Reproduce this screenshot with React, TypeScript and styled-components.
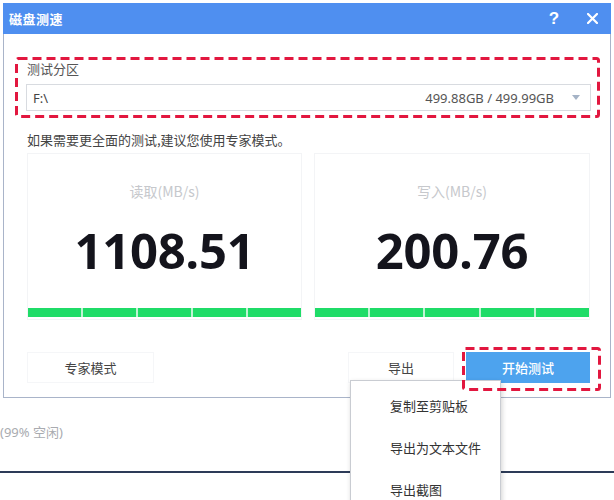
import React from "react";
import styled, { createGlobalStyle } from "styled-components";

const GlobalStyle = createGlobalStyle`
  html, body {
    margin: 0;
    padding: 0;
    background: #ffffff;
  }
  body {
    font-family: "Noto Sans CJK SC", "Noto Sans", sans-serif;
    -webkit-font-smoothing: antialiased;
  }
  * { box-sizing: border-box; }
`;

const Page = styled.div`
  position: relative;
  width: 614px;
  height: 500px;
  overflow: hidden;
  background: #fff;
  padding-top: 3px;
`;

const Dialog = styled.div`
  margin-left: 3px;
  width: 608px;
  border: 1px solid #a9b4c9;
  border-top: none;
  background: #fff;
`;

const TitleBar = styled.div`
  height: 31px;
  margin-left: -1px;
  margin-right: -1px;
  background: #4f8ff0;
  display: flex;
  align-items: center;
  padding: 0 0 0 6px;
  color: #fff;
`;

const Title = styled.div`
  flex: 1;
  font-size: 13px;
  font-weight: 700;
  letter-spacing: 0.5px;
`;

const TitleButton = styled.div`
  width: 38px;
  height: 31px;
  display: flex;
  align-items: center;
  justify-content: center;
  font-family: "Liberation Sans", Arial, sans-serif;
  font-size: 17px;
  font-weight: 700;
`;

const Body = styled.div`
  padding: 26px 20px 14px 23px;
  display: flex;
  flex-direction: column;
`;

const FieldLabel = styled.div`
  font-size: 13px;
  line-height: 18px;
  color: #555;
`;

const Select = styled.div`
  margin: 6px -1px 0 -1px;
  height: 27px;
  border: 1px solid #d8dbe0;
  display: flex;
  align-items: center;
  padding: 0 10px 0 6px;
  font-size: 13px;
  color: #444;
  font-family: "Noto Sans", "Noto Sans CJK SC", sans-serif;
`;

const SelectValue = styled.div`
  flex: 1;
`;

const SelectSize = styled.div`
  color: #555;
  margin-right: 18px;
`;

const Caret = styled.div`
  width: 0;
  height: 0;
  border-left: 4px solid transparent;
  border-right: 4px solid transparent;
  border-top: 5px solid #a5b3c6;
`;

const Hint = styled.div`
  margin-top: 20px;
  font-size: 13px;
  line-height: 18px;
  color: #444;
`;

const Cards = styled.div`
  margin-top: 4px;
  display: grid;
  grid-template-columns: 275px 276px;
  column-gap: 12px;
`;

const Card = styled.div`
  height: 167px;
  border: 1px solid #f3f4f6;
  display: flex;
  flex-direction: column;
  align-items: center;
  padding-top: 28px;
  padding-bottom: 2px;
`;

const CardLabel = styled.div`
  font-size: 14px;
  line-height: 18px;
  color: #c6c8cc;
`;

const Speed = styled.div`
  margin-top: 20px;
  font-family: "Open Sans", "Noto Sans", sans-serif;
  font-weight: 700;
  font-size: 49px;
  line-height: 60px;
  color: #14141c;
  letter-spacing: -0.3px;
`;

const Bar = styled.div`
  margin-top: auto;
  align-self: stretch;
  height: 9px;
  display: flex;
  gap: 2px;
  background: #bff3d3;
`;

const Segment = styled.div`
  flex: 1;
  background: #1fdc68;
`;

const ButtonRow = styled.div`
  margin-top: 32px;
  display: flex;
  align-items: center;
`;

const GhostButton = styled.div<{ $width: number }>`
  width: ${(p) => p.$width}px;
  height: 31px;
  border: 1px solid #f5f6f8;
  display: flex;
  align-items: center;
  justify-content: center;
  font-size: 13px;
  color: #444;
`;

const Spacer = styled.div`
  flex: 1;
`;

const PrimaryButton = styled.div`
  margin-left: 12px;
  width: 124px;
  height: 31px;
  background: #4da3ee;
  color: #fff;
  display: flex;
  align-items: center;
  justify-content: center;
  font-size: 13px;
  font-weight: 500;
`;

const Backdrop = styled.div`
  padding-top: 25px;
`;

const FreeText = styled.div`
  margin-left: 0;
  font-size: 13px;
  line-height: 18px;
  color: #a9abb0;
  font-family: "Noto Sans", "Noto Sans CJK SC", sans-serif;
`;

const Rule = styled.div`
  margin-top: 30px;
  height: 2px;
  background: #2d3b58;
`;

const Menu = styled.div`
  position: absolute;
  left: 350px;
  top: 380px;
  width: 151px;
  height: 140px;
  background: #fff;
  border: 1px solid #c9ccd2;
  box-shadow: 1px 2px 5px rgba(0, 0, 0, 0.18);
  padding-top: 3px;
`;

const MenuItem = styled.div`
  height: 42px;
  display: flex;
  align-items: center;
  padding-left: 39px;
  font-size: 13px;
  color: #333;
`;

const Annotation = styled.svg<{ $x: number; $y: number }>`
  position: absolute;
  left: ${(p) => p.$x}px;
  top: ${(p) => p.$y}px;
  overflow: visible;
  pointer-events: none;
`;

function Dashed({ x, y, w, h }: { x: number; y: number; w: number; h: number }) {
  return (
    <Annotation $x={x} $y={y} width={w} height={h}>
      <rect
        x={1.5}
        y={1.5}
        width={w - 3}
        height={h - 3}
        rx={2}
        fill="none"
        stroke="#e2173f"
        strokeWidth={3}
        strokeDasharray="9 5"
      />
    </Annotation>
  );
}

function SpeedCard({ label, value }: { label: string; value: string }) {
  return (
    <Card>
      <CardLabel>{label}</CardLabel>
      <Speed>{value}</Speed>
      <Bar>
        {[0, 1, 2, 3, 4].map((i) => (
          <Segment key={i} />
        ))}
      </Bar>
    </Card>
  );
}

export default function App() {
  return (
    <>
      <GlobalStyle />
      <Page>
        <Dialog>
          <TitleBar>
            <Title>磁盘测速</Title>
            <TitleButton>?</TitleButton>
            <TitleButton>
              <svg width="11" height="11" viewBox="0 0 11 11">
                <path d="M1 1 L10 10 M10 1 L1 10" stroke="#fff" strokeWidth="2.2" strokeLinecap="square" />
              </svg>
            </TitleButton>
          </TitleBar>
          <Body>
            <FieldLabel>测试分区</FieldLabel>
            <Select>
              <SelectValue>F:\</SelectValue>
              <SelectSize>499.88GB / 499.99GB</SelectSize>
              <Caret />
            </Select>
            <Hint>如果需要更全面的测试,建议您使用专家模式。</Hint>
            <Cards>
              <SpeedCard label="读取(MB/s)" value="1108.51" />
              <SpeedCard label="写入(MB/s)" value="200.76" />
            </Cards>
            <ButtonRow>
              <GhostButton $width={127}>专家模式</GhostButton>
              <Spacer />
              <GhostButton $width={106}>导出</GhostButton>
              <PrimaryButton>开始测试</PrimaryButton>
            </ButtonRow>
          </Body>
        </Dialog>
        <Backdrop>
          <FreeText>(99% 空闲)</FreeText>
          <Rule />
        </Backdrop>
        <Menu>
          <MenuItem>复制至剪贴板</MenuItem>
          <MenuItem>导出为文本文件</MenuItem>
          <MenuItem>导出截图</MenuItem>
        </Menu>
        <Dashed x={15} y={57} w={585} h={61} />
        <Dashed x={462} y={347} w={139} h={44} />
      </Page>
    </>
  );
}
